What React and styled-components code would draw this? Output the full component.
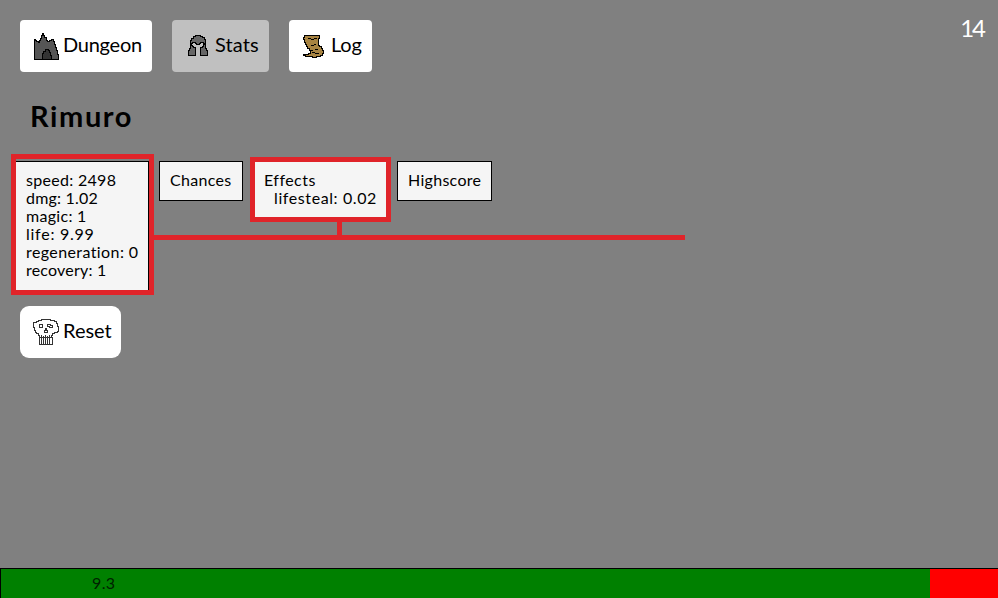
import React from "react";
import styled, { createGlobalStyle } from "styled-components";

const Global = createGlobalStyle`
  * { box-sizing: border-box; }
  html, body, #root { margin: 0; height: 100%; }
  body { background: #808080; color: #000; overflow: hidden; font: 16px/18px Lato, sans-serif; }
`;
const Screen = styled.main`
  position: relative;
  height: 100%;
  display: flex;
  flex-direction: column;
  align-items: flex-start;
  padding-top: 20px;
`;
const Toolbar = styled.nav`
  display: flex;
  gap: 20px;
  height: 52px;
  margin-left: 20px;
`;
const Button = styled.button`
  display: flex;
  align-items: center;
  flex: none;
  width: ${p => p.$width}px;
  height: 52px;
  padding: 0 0 0 ${p => p.$pad}px;
  gap: ${p => p.$gap}px;
  border: 0;
  border-radius: ${p => p.$radius || 4}px;
  background: ${p => (p.$active ? "#c0c0c0" : "#fff")};
  color: #000;
  font: 20px/24px Lato, sans-serif;
  white-space: nowrap;
`;
const ResetButton = styled(Button)`
  margin: 15px 0 0 20px;
`;
const Text = styled.span`
  display: block;
  white-space: nowrap;
  letter-spacing: ${p => p.$track || 0}px;
  padding-left: ${p => p.$indent || 0}px;
`;
const Label = styled(Text)`
  padding-bottom: 4px;
`;
const Icon = styled.svg`
  flex: none;
  display: block;
  shape-rendering: crispEdges;
`;
const Name = styled.h1`
  margin: 26px 0 0 30px;
  height: 63px;
  font: 700 29px/36px Lato, sans-serif;
`;
const Panels = styled.section`
  display: flex;
  align-items: flex-start;
  gap: 10px;
  margin-left: 15px;
`;
const Panel = styled.div`
  width: ${p => p.$width}px;
  padding: 9px 10px 11px;
  border: 1px solid #000;
  background: #f5f5f5;
`;
const Health = styled.footer`
  width: 100%;
  height: 30px;
  margin-top: auto;
  display: flex;
  border: solid #000;
  border-width: 1px 0 0 1px;
  background: #f00;
`;
const Life = styled.div`
  width: 929px;
  background: #008000;
  padding: 5px 0 0 91px;
  color: #002000;
`;
const Counter = styled.div`
  position: absolute;
  top: 14px;
  right: 14px;
  color: #fff;
  font: 24px/28px Lato, sans-serif;
`;
const Highlight = styled.div`
  position: absolute;
  left: ${p => p.$x}px;
  top: ${p => p.$y}px;
  width: ${p => p.$w}px;
  height: ${p => p.$h}px;
  border: 5px solid #e0242a;
`;
const Connector = styled(Highlight)`
  border: 0;
  background: #e0242a;
`;

const Mountain = () => (
  <Icon width="26" height="27" viewBox="0 0 26 27">
    <path fill="#555" stroke="#000" d="M.5 26.5V6.5H1.5V7.5H2.5V8.5H4.5V9.5H5.5V7.5H6.5V5.5H7.5V2.5H8.5V.5H9.5V2.5H10.5V4.5H12.5V7.5H13.5V8.5H15.5V7.5H17.5V6.5H19.5V8.5H20.5V11.5H21.5V14.5H22.5V17.5H23.5V21.5H24.5V26.5Z" />
    <path fill="#333" stroke="#000" d="M8.5 26.5V20.5H9.5V18.5H11.5V16.5H14.5V17.5H15.5V19.5H16.5V22.5H17.5V26.5Z" />
  </Icon>
);
const Helmet = () => (
  <Icon width="21" height="22" viewBox="0 0 21 22">
    <path fill="#666" stroke="#000" d="M.5 20.5V15.5H1.5V13.5H2.5V5.5H3.5V3.5H5.5V1.5H7.5V.5H12.5V1.5H14.5V2.5H16.5V4.5H17.5V13.5H18.5V15.5H19.5V20.5H12.5V12.5H14.5V11.5H15.5V9.5H16.5V8.5H15.5V7.5H12.5V8.5H11.5V9.5H8.5V8.5H7.5V7.5H4.5V8.5H3.5V10.5H4.5V11.5H5.5V12.5H7.5V20.5Z" />
  </Icon>
);
const Scroll = () => (
  <Icon width="22" height="25" viewBox="0 0 22 25">
    <path fill="#a88442" stroke="#000" d="M1.5 1.5H16.5V4.5H15.5V11.5H16.5V12.5H18.5V14.5H19.5V16.5H20.5V19.5H19.5V21.5H17.5V22.5H13.5V23.5H9.5V22.5H2.5V21.5H.5V20.5H5.5V19.5H7.5V16.5H6.5V14.5H4.5V12.5H3.5V10.5H2.5V8.5H1.5V5.5H.5V3.5H1.5Z" />
    <path fill="none" stroke="#000" d="M5 4.5H8M8 5.5H11M11 4.5H14M8 11.5H11M11 10.5H13M7 16.5H10M12 15.5H15M9 18.5H12M12 19.5H16" />
  </Icon>
);
const Skull = () => (
  <Icon width="27" height="27" viewBox="0 0 27 27">
    <path fill="#fff" stroke="#333" d="M.5 5.5V3.5H3.5V2.5H5.5V1.5H8.5V.5H17.5V1.5H21.5V2.5H23.5V4.5H24.5V7.5H25.5V12.5H24.5V13.5H21.5V14.5H19.5V16.5H18.5V18.5H19.5V25.5H6.5V16.5H5.5V14.5H3.5V13.5H2.5V11.5H1.5V8.5H.5Z" />
    <path fill="none" stroke="#333" d="M6.5 5.5H9.5V8.5H6.5ZM14.5 5.5H17.5V6.5H19.5V8.5H16.5V7.5H14.5ZM12.5 9V11.5H11.5V13.5H14.5V11.5H13.5V9M6 18.5H19M8.5 16V25M10.5 17V25M12.5 16V25M14.5 17V25M16.5 16V25" />
  </Icon>
);

export default function App() {
  return (
    <Screen>
      <Global />
      <Toolbar>
        <Button $width={132} $pad={14} $gap={3}><Mountain /><Label $track={-0.25}>Dungeon</Label></Button>
        <Button $width={97} $pad={16} $gap={6} $active><Helmet /><Label $track={0.1}>Stats</Label></Button>
        <Button $width={83} $pad={14} $gap={6}><Scroll /><Label $track={-0.2}>Log</Label></Button>
      </Toolbar>
      <Name><Text $track={1.6}>Rimuro</Text></Name>
      <Panels>
        <Panel $width={134}>
          <Text $track={0.3}>speed: 2498</Text>
          <Text $track={0.2}>dmg: 1.02</Text>
          <Text $track={0.3}>magic: 1</Text>
          <Text $track={0.75}>life: 9.99</Text>
          <Text $track={0.4}>regeneration: 0</Text>
          <Text $track={0.2}>recovery: 1</Text>
        </Panel>
        <Panel $width={84}><Text $track={0.3}>Chances</Text></Panel>
        <Panel $width={134}>
          <Text $track={0.45}>Effects</Text>
          <Text $indent={10} $track={0.6}>lifesteal: 0.02</Text>
        </Panel>
        <Panel $width={95}><Text $track={0.3}>Highscore</Text></Panel>
      </Panels>
      <ResetButton $width={101} $pad={13} $gap={3} $radius={9}><Skull /><Label>Reset</Label></ResetButton>
      <Health><Life><Text $track={0.4}>9.3</Text></Life></Health>
      <Counter><Text $track={-2}>14</Text></Counter>
      <Highlight $x={11} $y={154} $w={143} $h={141} />
      <Highlight $x={250} $y={157} $w={141} $h={65} />
      <Connector $x={337} $y={222} $w={5} $h={13} />
      <Connector $x={154} $y={235} $w={531} $h={5} />
    </Screen>
  );
}
